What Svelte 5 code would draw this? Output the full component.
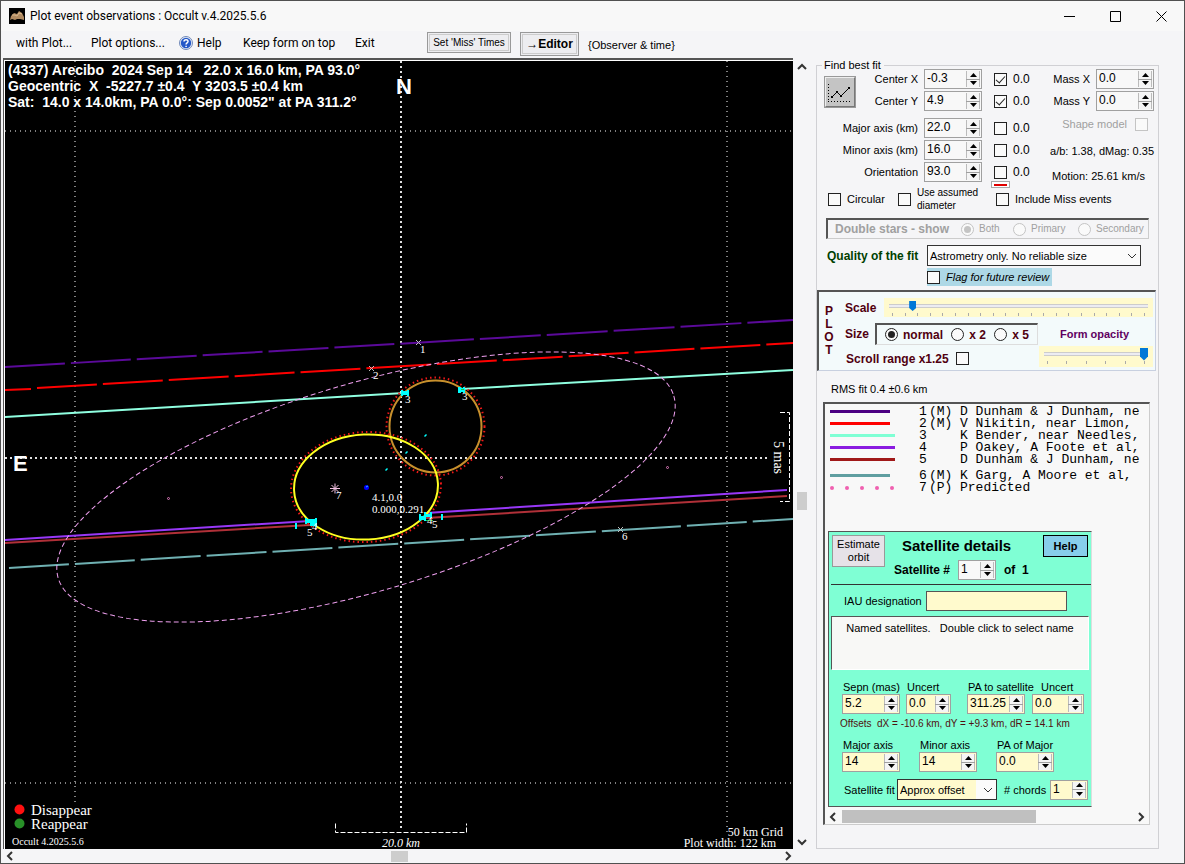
<script>
  const header = [
    "(4337) Arecibo  2024 Sep 14   22.0 x 16.0 km, PA 93.0°",
    "Geocentric  X  -5227.7 ±0.4  Y 3203.5 ±0.4 km",
    "Sat:  14.0 x 14.0km, PA 0.0°: Sep 0.0052\" at PA 311.2°",
  ];

  const fitRows = [
    { id: "cx", label: "Center X", value: "-0.3", checked: true },
    { id: "cy", label: "Center Y", value: "4.9", checked: true },
    { id: "major", label: "Major axis (km)", value: "22.0", checked: false, spaced: true },
    { id: "minor", label: "Minor axis (km)", value: "16.0", checked: false },
    { id: "orient", label: "Orientation", value: "93.0", checked: false },
  ];

  const observers = [
    { n: 1, tag: "(M)", name: "D Dunham & J Dunham, ne", color: "#4b0082", len: 60 },
    { n: 2, tag: "(M)", name: "V Nikitin, near Limon,", color: "#ff0000", len: 60 },
    { n: 3, tag: "", name: "K Bender, near Needles,", color: "#7fffd4", len: 65 },
    { n: 4, tag: "", name: "P Oakey, A Foote et al,", color: "#8a1be0", len: 65 },
    { n: 5, tag: "", name: "D Dunham & J Dunham, ne", color: "#a01818", len: 65 },
    { n: 6, tag: "(M)", name: "K Garg, A Moore et al,", color: "#5f9ea0", len: 60, spaced: true },
    { n: 7, tag: "(P)", name: "Predicted", color: "#f060b0", dots: true },
  ];

  const chords = [
    { x1: 5, y1: 367, x2: 413, y2: 343, color: "#5b0a9a", dash: "60 6" },
    { x1: 413, y1: 343, x2: 793, y2: 320, color: "#5b0a9a", dash: "61 6" },
    { x1: 5, y1: 390, x2: 31, y2: 389, color: "#ff0000" },
    { x1: 37, y1: 388, x2: 371, y2: 368, color: "#ff0000", dash: "60 6" },
    { x1: 371, y1: 368, x2: 793, y2: 343, color: "#ff0000", dash: "60 6" },
    { x1: 5, y1: 417, x2: 404, y2: 393, color: "#8fffe0" },
    { x1: 462, y1: 389, x2: 793, y2: 370, color: "#8fffe0" },
    { x1: 5, y1: 540, x2: 310, y2: 521, color: "#9838f8" },
    { x1: 426, y1: 513, x2: 787, y2: 490, color: "#9838f8" },
    { x1: 5, y1: 543, x2: 310, y2: 525, color: "#b03038" },
    { x1: 426, y1: 518, x2: 787, y2: 496, color: "#b03038" },
    { x1: 9, y1: 568, x2: 621, y2: 530, color: "#6fb0b2", dash: "60 6" },
    { x1: 621, y1: 530, x2: 793, y2: 519, color: "#6fb0b2", dash: "60 6" },
  ];

  const pointLabels = [
    [420, 353, "1"],
    [373, 379, "2"],
    [405, 403, "3"],
    [462, 400, "3"],
    [307, 536, "5"],
    [312, 530, "4"],
    [427, 524, "4"],
    [432, 528, "5"],
    [336, 499, "7"],
    [622, 540, "6"],
  ];

  const separation = [
    { id: "sepn", label: "Sepn (mas)", value: "5.2", width: 58 },
    { id: "sepu", label: "Uncert", value: "0.0", width: 45 },
    { id: "pa", label: "PA to satellite", value: "311.25", width: 58 },
    { id: "pau", label: "Uncert", value: "0.0", width: 52, inset: true },
  ];

  const axes = [
    { id: "smaj", label: "Major axis", value: "14", width: 58 },
    { id: "smin", label: "Minor axis", value: "14", width: 58 },
    { id: "spa", label: "PA of Major", value: "0.0", width: 58 },
  ];
</script>

<svelte:head>
  <title>Plot event observations</title>
</svelte:head>

{#snippet spin(id, value, width, name)}
  <span class="spin" style={`width: ${width}px`}>
    <input {id} type="text" {value} aria-label={name} />
    <span class="arrows">
      <button aria-label="Increase"><svg viewBox="0 0 7 4"><path d="M0 4h7L3.5 0z" /></svg></button>
      <button aria-label="Decrease"><svg viewBox="0 0 7 4"><path d="M0 0h7L3.5 4z" /></svg></button>
    </span>
  </span>
{/snippet}

{#snippet chevron(d)}
  <svg class="chev" viewBox="0 0 10 10" aria-hidden="true"><path {d} /></svg>
{/snippet}

<div class="window">
  <header class="title">
    <svg class="app-icon" viewBox="0 0 16 16" aria-hidden="true">
      <rect width="16" height="16" fill="#000" />
      <path d="M1 12L2 8l3-3 3 1 2-3 3 2 2 4v3l-4-1-3 0-2 1-3-1z" fill="#b08a60" />
      <path d="M3 7l3 0 2 1 2-3 3 1" stroke="#d9b88c" fill="none" />
    </svg>
    <h1>Plot event observations : Occult v.4.2025.5.6</h1>
    <div class="caption">
      <button aria-label="Minimize"><svg viewBox="0 0 11 11"><path d="M0 5.5h11" /></svg></button>
      <button aria-label="Maximize"><svg viewBox="0 0 11 11"><path d="M.5.5h10v10H.5z" /></svg></button>
      <button aria-label="Close"><svg viewBox="0 0 11 11"><path d="M.5.5l10 10M10.5.5l-10 10" /></svg></button>
    </div>
  </header>

  <nav class="menu">
    <button class="item first">with Plot...</button>
    <button class="item second">Plot options...</button>
    <button class="item help">
      <svg viewBox="0 0 14 14" aria-hidden="true">
        <circle cx="7" cy="7" r="6.5" fill="#e8eef8" stroke="#7088b8" />
        <circle cx="7" cy="7" r="5.2" fill="#2458c8" />
        <path d="M5 5.6C5 3 9.2 3 9 5.5 8.9 7 7.1 6.8 7.1 8.5M7.1 9.7v1.3" stroke="#fff" stroke-width="1.5" fill="none" />
      </svg>
      Help
    </button>
    <button class="item keep">Keep form on top</button>
    <button class="item exit">Exit</button>
    <button class="tool">Set 'Miss' Times</button>
    <button class="tool editor">→Editor</button>
    <span class="hint">&#123;Observer &amp; time&#125;</span>
  </nav>

  <main>
    <section class="viewer" aria-label="Plot">
      <div class="canvas">
        <svg viewBox="5 61 788 788" preserveAspectRatio="xMidYMid slice">
          <rect x="5" y="61" width="788" height="788" fill="#000" />

          <g class="grid">
            <path d="M75 61V802M727 61V836M5 131H793M5 783H793" />
            <path class="axis" d="M401 61V830M5 457.5H767" />
          </g>

          <g class="heading">
            {#each header as line, i}
              <text x="8" y={75 + i * 16}>{line}</text>
            {/each}
          </g>
          <text class="compass" x="396" y="94">N</text>
          <text class="compass" x="13" y="471">E</text>

          {#each chords as c}
            <line x1={c.x1} y1={c.y1} x2={c.x2} y2={c.y2} stroke={c.color} stroke-width="2" stroke-dasharray={c.dash} />
          {/each}

          <g fill="none">
            <ellipse cx="366" cy="487" rx="321" ry="104" transform="rotate(-16.5 366 487)" stroke="#f0a0f0" stroke-dasharray="5 3" />
            <circle cx="435.5" cy="426.5" r="49" stroke="#f01818" stroke-width="2" stroke-dasharray="1.5 3" />
            <circle cx="435.5" cy="426.5" r="46" stroke="#c8902c" stroke-width="2" />
            <ellipse cx="366" cy="487" rx="75" ry="55" transform="rotate(-3 366 487)" stroke="#f01818" stroke-width="2" stroke-dasharray="1.5 3" />
            <ellipse cx="366" cy="487" rx="72" ry="52.5" transform="rotate(-3 366 487)" stroke="#ffff20" stroke-width="2" />
          </g>

          <!-- chord ends -->
          <g fill="#00ffff">
            <path d="M401 390h2v1h4v-1h2v6h-2v-1h-4v1h-2z" />
            <path d="M458 387h3v1h2v-1h2v6h-2v-1h-2v1h-3z" />
            <path d="M305 518h2v1h8v-1h2v9h-2v-1h-5v-3h-3v1h-2z" />
            <path d="M419 514h2v2h3v-4h2v2h4v-2h2v7h-2v-2h-4v4h-2v-1h-3v1h-2z" />
            <path d="M295 523h2v6h-2zM441 514h2v6h-2z" />
            <path d="M424 436l2-2 1 1-2 2zM405 453l2-2 1 1-2 2zM385 470l2-2 1 1-2 2z" />
          </g>
          <path d="M304 525.5h6M430 518.5h3" stroke="#c04040" />
          <path d="M426 520.5h7M461 389.5h3" stroke="#20c040" />

          <circle cx="366.5" cy="487.5" r="2.5" fill="#0000ff" />
          <path d="M366 487l2-1" stroke="#20c8ff" />
          <path d="M335 483.5v10M330 488.5h10M331.5 485l7 7M338.5 485l-7 7" stroke="#f0c0e0" />
          <g fill="none" stroke="#d878b8">
            <circle cx="168.5" cy="498.5" r="1" />
            <circle cx="501.5" cy="477.5" r="1" />
            <circle cx="667.5" cy="467.5" r="1" />
          </g>
          <path d="M416 340l5 5m0-5l-5 5M369 366l5 5m0-5l-5 5M618 527l5 5m0-5l-5 5" stroke="#c0c0c0" />

          <g class="small">
            {#each pointLabels as [x, y, label]}
              <text {x} {y}>{label}</text>
            {/each}
            <text x="372" y="501">4.1,0.0</text>
            <text x="372" y="513">0.000,0.291</text>
          </g>

          <g fill="none" stroke="#fff" stroke-dasharray="5 2">
            <path d="M335.5 823.5v9H466.5v-9" />
            <path d="M780 412.5h9.5V501.5h-9.5" />
          </g>
          <text class="scale-label" x="382" y="847">20.0 km</text>
          <text class="mas" transform="translate(774 441) rotate(90)">5 mas</text>
          <text class="note" x="783" y="836" text-anchor="end">50 km Grid</text>
          <text class="note" x="776" y="847" text-anchor="end">Plot width: 122 km</text>

          <circle cx="19.5" cy="809.5" r="5" fill="#ff1010" />
          <circle cx="19.5" cy="823.5" r="5" fill="#289028" />
          <text class="key" x="31" y="815">Disappear</text>
          <text class="key" x="31" y="829">Reappear</text>
          <text class="version" x="12" y="845">Occult 4.2025.5.6</text>
        </svg>
      </div>
      <div class="vscroll">
        {@render chevron("M1 7l4-4 4 4")}
        <i></i>
        {@render chevron("M1 3l4 4 4-4")}
      </div>
      <div class="hscroll">
        {@render chevron("M7 1L3 5l4 4")}
        <i></i>
        {@render chevron("M3 1l4 4-4 4")}
      </div>
    </section>

    <aside>
      <fieldset class="best">
        <legend>Find best fit</legend>

        <div class="fit">
          <button class="fit-icon" aria-label="Fit">
            <svg viewBox="0 0 26 26" aria-hidden="true">
              <path d="M2.5 5v17M2 22.5h22" stroke="#000" stroke-dasharray="1 2" />
              <path d="M6 18l5-5 4 4 8-8" stroke="#000" fill="none" />
              <path d="M5 17h2v2H5zM10 12h2v2h-2zM14 16h2v2h-2zM22 8h2v2h-2z" />
            </svg>
          </button>

          <div class="params">
            {#each fitRows as row}
              <div class="param" class:spaced={row.spaced}>
                <label class="name" for={row.id}>{row.label}</label>
                {@render spin(row.id, row.value, 58, row.label)}
                <label class="sigma"><input type="checkbox" checked={row.checked} />0.0</label>
              </div>
            {/each}
            <button class="swatch" aria-label="Line colour"></button>
          </div>

          <div class="mass">
            <div class="mass-row"><label for="mx">Mass X</label>{@render spin("mx", "0.0", 58, "Mass X")}</div>
            <div class="mass-row"><label for="my">Mass Y</label>{@render spin("my", "0.0", 58, "Mass Y")}</div>
            <label class="shape">Shape model <input type="checkbox" disabled /></label>
            <p>a/b: 1.38, dMag: 0.35</p>
            <p class="motion">Motion: 25.61 km/s</p>
          </div>
        </div>

        <div class="checks">
          <label><input type="checkbox" />Circular</label>
          <label class="assumed"><input type="checkbox" /><span>Use assumed diameter</span></label>
          <label><input type="checkbox" />Include Miss events</label>
        </div>

        <div class="double">
          <b>Double stars - show</b>
          <label><input type="radio" name="star" checked disabled />Both</label>
          <label><input type="radio" name="star" disabled />Primary</label>
          <label><input type="radio" name="star" disabled />Secondary</label>
        </div>

        <div class="quality">
          <label for="quality">Quality of the fit</label>
          <span class="select">
            <select id="quality"><option>Astrometry only. No reliable size</option></select>
            {@render chevron("M1 3l4 4 4-4")}
          </span>
        </div>
        <label class="flag"><input type="checkbox" />Flag for future review</label>

        <section class="plot-box">
          <div class="vertical"><span>P</span><span>L</span><span>O</span><span>T</span></div>
          <div class="plot-rows">
            <div class="scale-row">
              <label for="scale">Scale</label>
              <div class="slider">
                <input id="scale" type="range" min="0" max="20" step="0.1" value="1.6" />
                <div class="ticks">{#each Array(21) as _}<i></i>{/each}</div>
              </div>
            </div>
            <div class="size-row">
              <span>Size</span>
              <div class="sizes">
                <label><input type="radio" name="size" checked />normal</label>
                <label><input type="radio" name="size" />x 2</label>
                <label><input type="radio" name="size" />x 5</label>
              </div>
              <label class="opacity-label" for="opacity">Form opacity</label>
            </div>
            <div class="range-row">
              <label>Scroll range x1.25 <input type="checkbox" /></label>
              <div class="slider opacity">
                <input id="opacity" type="range" value="100" />
                <div class="ticks">{#each Array(6) as _}<i></i>{/each}</div>
              </div>
            </div>
          </div>
        </section>

        <p class="rms">RMS fit 0.4 ±0.6 km</p>

        <section class="list">
          <ul>
            {#each observers as o}
              <li class:spaced={o.spaced}>
                <svg viewBox="0 0 66 12" aria-hidden="true">
                  {#if o.dots}
                    {#each [2, 17, 32, 47, 62] as x}<circle cx={x} cy="6" r="2" fill={o.color} />{/each}
                  {:else}
                    <path d={`M0 5.5H${o.len}`} stroke={o.color} stroke-width="3" />
                  {/if}
                </svg>
                <span>{o.n}</span>
                <span>{o.tag}</span>
                <span>{o.name}</span>
              </li>
            {/each}
          </ul>

          <section class="satellite">
            <div class="sat-head">
              <button class="estimate">Estimate orbit</button>
              <div class="sat-title">
                <h2>Satellite details</h2>
                <div class="sat-number">
                  <label for="satno">Satellite #</label>
                  <span class="plain">{@render spin("satno", "1", 38, "Satellite number")}</span>
                  <span>of&nbsp; 1</span>
                </div>
              </div>
              <button class="sat-help">Help</button>
            </div>

            <div class="iau">
              <label for="iau">IAU designation</label>
              <input id="iau" type="text" />
            </div>

            <div class="named">Named satellites. &nbsp; Double click to select name</div>

            <div class="fields four">
              {#each separation as f}
                <div>
                  <label for={f.id} class:inset={f.inset}>{f.label}</label>
                  {@render spin(f.id, f.value, f.width, f.label)}
                </div>
              {/each}
            </div>
            <p class="offsets">Offsets&nbsp; dX = -10.6 km, dY = +9.3 km, dR = 14.1 km</p>
            <div class="fields three">
              {#each axes as f}
                <div><label for={f.id}>{f.label}</label>{@render spin(f.id, f.value, f.width, f.label)}</div>
              {/each}
            </div>

            <div class="sat-fit">
              <label for="satfit">Satellite fit</label>
              <span class="select">
                <select id="satfit"><option>Approx offset</option></select>
                {@render chevron("M1 3l4 4 4-4")}
              </span>
              <label class="chords" for="chords"># chords</label>
              {@render spin("chords", "1", 38, "Chords")}
            </div>
          </section>

          <div class="hscroll inner">
            {@render chevron("M7 1L3 5l4 4")}
            <i></i>
            {@render chevron("M3 1l4 4-4 4")}
          </div>
        </section>
      </fieldset>
    </aside>
  </main>
</div>

<style>
  :global(body) {
    background: #f5f5f7;
  }

  * {
    box-sizing: border-box;
  }

  h1, h2, p, ul {
    margin: 0;
    padding: 0;
    font-weight: normal;
  }

  button, input, select {
    font: inherit;
    color: inherit;
    margin: 0;
    padding: 0;
    border: 0;
    background: none;
    border-radius: 0;
  }

  label, p, button {
    white-space: nowrap;
  }

  .window {
    display: flex;
    flex-direction: column;
    min-height: 100vh;
    border: 1px solid #505050;
    background: #f5f5f7;
    color: #000;
    font: 11px/14px "Liberation Sans", Arial, sans-serif;
  }

  /* title bar and menu */
  .title {
    display: flex;
    align-items: center;
    height: 30px;
    padding-left: 8px;
    background: #f8f8f8;
  }

  .app-icon {
    width: 16px;
    height: 16px;
    margin-right: 5px;
  }

  h1 {
    flex: 1;
    font: 12px/16px Roboto, sans-serif;
  }

  .caption {
    display: flex;
  }

  .caption button {
    width: 46px;
    height: 28px;
    display: grid;
    place-items: center;
  }

  .caption svg {
    width: 11px;
    height: 11px;
    fill: none;
    stroke: #000;
  }

  .menu {
    display: flex;
    align-items: flex-start;
    height: 27px;
    padding: 1px 0 0 15px;
  }

  .item {
    display: flex;
    align-items: center;
    gap: 4px;
    height: 22px;
    font: 12px/22px Roboto, sans-serif;
  }

  .first { width: 75px; }
  .second { width: 88px; }
  .help { width: 64px; }
  .keep { width: 112px; }
  .exit { width: 72px; }

  .item svg {
    width: 14px;
    height: 14px;
  }

  .tool {
    width: 84px;
    height: 21px;
    margin-right: 9px;
    border: 1px solid #999;
    outline: 1px solid #ccc;
    outline-offset: -3px;
    background: #ededf0;
    font-size: 10px;
  }

  .editor {
    width: 59px;
    height: 24px;
    font-size: 12px;
    font-weight: bold;
  }

  .hint {
    line-height: 26px;
  }

  /* plot */
  main {
    flex: 1;
    display: grid;
    grid-template-columns: minmax(0, 1fr) 374px;
  }

  .viewer {
    display: grid;
    grid-template-columns: minmax(0, 1fr) 17px;
    grid-template-rows: minmax(0, 1fr) 14px;
    padding-left: 2px;
  }

  .canvas {
    position: relative;
    border-top: 2px solid #555;
    border-left: 1px solid #555;
    box-shadow: inset 1px 1px #fff;
    padding: 1px 0 0 1px;
  }

  .canvas > svg {
    display: block;
    width: 100%;
    height: 100%;
  }

  .canvas text {
    fill: #fff;
    font-family: "Liberation Serif", "Times New Roman", serif;
    white-space: pre;
  }

  .canvas .heading text {
    font: bold 14px "Liberation Sans", Arial, sans-serif;
  }

  .canvas .compass {
    font: bold 22px "Liberation Sans", Arial, sans-serif;
  }

  .small text { font-size: 11px; }
  .note { font-size: 12px; }
  .mas { font-size: 14px; }
  .key { font-size: 15px; }
  .version { font-size: 10px; }

  .scale-label {
    font-size: 12px;
    font-style: italic;
  }

  .grid path {
    fill: none;
    stroke: #808080;
    stroke-width: 2;
    stroke-dasharray: 1 4;
    shape-rendering: crispEdges;
  }

  .grid .axis {
    stroke: #e0e0e0;
    stroke-dasharray: 2 3;
  }

  .chev {
    width: 10px;
    height: 10px;
    fill: none;
    stroke: #333;
    stroke-width: 2;
  }

  .vscroll {
    display: flex;
    flex-direction: column;
    align-items: center;
    padding: 4px 0 2px;
  }

  .vscroll i {
    width: 10px;
    height: 18px;
    margin: auto 0;
    position: relative;
    top: 46px;
    background: #cdcdcd;
  }

  .hscroll {
    display: flex;
    align-items: center;
    padding: 0 0 0 2px;
  }

  .hscroll i {
    width: 17px;
    height: 11px;
    margin: 0 auto;
    background: #cdcdcd;
  }

  /* right hand form */
  aside {
    padding: 3px 25px 14px 6px;
  }

  .best {
    min-width: 0;
    height: 100%;
    margin: 0;
    padding: 0;
    border: 1px solid #d0d0d4;
  }

  legend {
    margin-left: 5px;
    padding: 0 3px 0 2px;
    line-height: 8px;
  }

  input[type="checkbox"], input[type="radio"] {
    appearance: none;
    flex: none;
    position: relative;
    width: 13px;
    height: 13px;
    border: 1px solid #222;
    background: #fafafa;
  }

  input[type="radio"] {
    border-radius: 50%;
  }

  input[type="checkbox"]:checked::after {
    content: "";
    position: absolute;
    left: 3px;
    top: 0;
    width: 4px;
    height: 8px;
    border: solid #222;
    border-width: 0 1px 1px 0;
    transform: rotate(42deg);
  }

  input[type="radio"]:checked::after {
    content: "";
    position: absolute;
    inset: 2px;
    border-radius: 50%;
    background: #222;
  }

  input:disabled {
    border-color: #c4c4c4 !important;
  }

  input[type="radio"]:disabled::after {
    background: #c4c4c4 !important;
  }

  .spin {
    display: flex;
    height: 20px;
    padding: 1px;
    border: 1px solid #a0a0a0;
    background: #f8f8f8;
  }

  .spin input {
    flex: 1;
    min-width: 0;
    height: 14px;
    padding-left: 1px;
    font-size: 12px;
    line-height: 14px;
  }

  .arrows {
    display: flex;
    flex-direction: column;
    gap: 1px;
    width: 14px;
    background: #a0a0a0;
  }

  .arrows button {
    flex: 1;
    display: grid;
    place-items: center;
    border: solid #bbb;
    border-width: 0 1px;
    background: #f5f5f5;
  }

  .arrows svg {
    display: block;
    width: 7px;
    height: 4px;
  }

  .fit {
    display: flex;
    height: 112px;
  }

  .fit-icon {
    width: 32px;
    height: 32px;
    margin: 7px 0 0 7px;
    border: 2px solid;
    border-color: #eee #777 #777 #eee;
    outline: 1px solid #999;
    outline-offset: -1px;
    background: #c4c4c4;
  }

  .fit-icon svg {
    display: block;
    width: 26px;
    height: 26px;
  }

  .params {
    position: relative;
  }

  .param {
    display: grid;
    grid-template-columns: 62px 58px 40px;
    column-gap: 6px;
    align-items: center;
    margin-bottom: 2px;
  }

  .param.spaced {
    margin-top: 7px;
  }

  .name {
    justify-self: end;
  }

  .sigma {
    display: flex;
    align-items: center;
    gap: 6px;
    padding-left: 6px;
    font-size: 12px;
  }

  .swatch {
    position: absolute;
    left: 135px;
    top: 112px;
    width: 19px;
    height: 7px;
    border: 1px solid #aaa;
    background: linear-gradient(#e00000, #e00000) center / 13px 2px no-repeat #fff;
  }

  .mass {
    flex: 1;
    display: flex;
    flex-direction: column;
    align-items: flex-end;
    padding-right: 4px;
  }

  .mass-row {
    display: flex;
    align-items: center;
    gap: 6px;
    margin-bottom: 2px;
  }

  .shape {
    display: flex;
    align-items: center;
    gap: 8px;
    margin: 4px 6px 13px 0;
    color: #a0a0a0;
  }

  .motion {
    padding: 11px 9px 0 0;
  }

  .checks {
    display: grid;
    grid-template-columns: 70px 98px 1fr;
    align-items: center;
    height: 26px;
    margin: 5px 0 0 11px;
  }

  .checks label {
    display: flex;
    align-items: center;
    gap: 6px;
  }

  .assumed span {
    width: 66px;
    font-size: 10px;
    line-height: 13px;
    white-space: normal;
  }

  .double {
    display: grid;
    grid-template-columns: 126px 52px 65px 1fr;
    align-items: center;
    height: 21px;
    margin: 6px 9px 0;
    padding-left: 7px;
    border: 1px solid #ccc;
    border-width: 2px 1px 1px 2px;
    border-color: #555 #ccc #ccc #555;
    color: #a0a0a0;
    font-size: 10px;
  }

  .double b {
    font-size: 12px;
  }

  .double label {
    display: flex;
    align-items: center;
    gap: 5px;
  }

  .quality {
    display: grid;
    grid-template-columns: 100px 1fr;
    align-items: center;
    margin: 6px 17px 0 10px;
  }

  .quality label {
    color: #004000;
    font-size: 12px;
    font-weight: bold;
  }

  .select {
    display: block;
    position: relative;
    height: 21px;
  }

  .select select {
    appearance: none;
    width: 100%;
    height: 21px;
    padding-left: 2px;
    border: 1px solid #333;
    background: #fbfbfb;
  }

  .select .chev {
    position: absolute;
    right: 4px;
    top: 6px;
    stroke-width: 1;
    pointer-events: none;
  }

  .flag {
    display: flex;
    align-items: center;
    gap: 6px;
    width: 125px;
    height: 18px;
    margin: 2px 0 0 110px;
    background: #add8e6;
    font-style: italic;
  }

  .plot-box {
    display: flex;
    gap: 6px;
    height: 81px;
    margin: 4px 2px 0 0;
    border: solid;
    border-width: 2px 1px 1px 2px;
    border-color: #555 #c8d0e0 #c8d0e0 #555;
    background: #f3fafb;
    color: #500010;
    font-size: 12px;
    font-weight: bold;
  }

  .vertical {
    display: flex;
    flex-direction: column;
    align-items: center;
    width: 20px;
    padding-top: 13px;
    line-height: 13px;
  }

  .plot-rows {
    flex: 1;
    padding-right: 2px;
  }

  .scale-row, .size-row, .range-row {
    display: flex;
    align-items: center;
  }

  .scale-row {
    margin-top: 6px;
  }

  .scale-row > label {
    width: 39px;
  }

  .slider {
    flex: 1;
    height: 19px;
    padding: 3px 5px 0;
    background: #fffacd;
  }

  .slider.opacity {
    flex: none;
    width: 114px;
    height: 21px;
    margin-left: auto;
  }

  .slider input {
    appearance: none;
    display: block;
    width: 100%;
    height: 10px;
    background: linear-gradient(#ececf2, #ececf2) center / 100% 2px no-repeat, linear-gradient(#ccc, #ccc) center / 100% 4px no-repeat;
  }

  .slider input::-webkit-slider-thumb {
    appearance: none;
    width: 7px;
    height: 10px;
    background: #0078d7;
    clip-path: polygon(0 0, 100% 0, 100% 70%, 50% 100%, 0 70%);
  }

  .slider.opacity input::-webkit-slider-thumb {
    width: 8px;
    height: 13px;
  }

  .ticks {
    display: flex;
    justify-content: space-between;
    padding: 2px 3px 0;
  }

  .ticks i {
    width: 1px;
    height: 3px;
    background: #aaa;
  }

  .size-row {
    height: 22px;
    margin-top: 6px;
  }

  .size-row > span {
    width: 30px;
  }

  .sizes {
    display: flex;
    align-items: center;
    justify-content: space-between;
    width: 163px;
    height: 22px;
    padding: 0 8px 0 8px;
    border: 2px solid;
    border-width: 2px 1px 1px 2px;
    border-color: #555 #ddd #ddd #555;
  }

  .sizes label {
    display: flex;
    align-items: center;
    gap: 5px;
  }

  .opacity-label {
    margin-left: 22px;
    color: #600060;
    font-size: 11px;
  }

  .range-row {
    margin-top: 1px;
  }

  .range-row label {
    display: flex;
    align-items: center;
    gap: 7px;
    padding: 4px 0 0 1px;
  }

  .rms {
    margin: 11px 0 0 14px;
  }

  .list {
    margin: 6px 8px 0 6px;
    border: 1px solid #ccc;
    border-width: 2px 1px 1px 2px;
    border-color: #555 #ccc #ccc #555;
    background: #f8f8f8;
    overflow: hidden;
  }

  .list ul {
    padding-top: 2px;
    margin-bottom: 37px;
    list-style: none;
    font: 13px/12px "Liberation Mono", "Courier New", monospace;
  }

  .list li {
    display: grid;
    grid-template-columns: 89px 10px 31px 1fr;
    height: 12px;
    padding-left: 5px;
    white-space: nowrap;
  }

  .list li.spaced {
    margin-top: 4px;
  }

  .list li svg {
    width: 66px;
    height: 12px;
  }

  .satellite {
    width: 264px;
    margin-left: 3px;
    padding-bottom: 6px;
    border: 1px solid #555;
    border-right-color: #ddd;
    background: #7fffd4;
  }

  .sat-head {
    display: flex;
    height: 53px;
    margin: 0 0 0 2px;
    padding: 3px 3px 0 1px;
    border-bottom: 1px solid #333;
  }

  .estimate {
    width: 53px;
    height: 32px;
    border: 1px solid #999;
    background: #e6e2e8;
    line-height: 13px;
    white-space: normal;
  }

  .sat-title {
    flex: 1;
    padding-left: 9px;
    font-weight: bold;
  }

  h2 {
    margin: 0 0 3px 8px;
    font-size: 15px;
    font-weight: bold;
    line-height: 22px;
  }

  .sat-number {
    display: flex;
    align-items: center;
    gap: 8px;
    font-size: 12px;
    line-height: 20px;
  }

  .sat-number input {
    font-weight: normal;
  }

  .sat-help {
    width: 45px;
    height: 22px;
    border: 1px solid #000;
    background: #87ceeb;
    font-weight: bold;
  }

  .iau {
    display: grid;
    grid-template-columns: 82px 141px;
    align-items: center;
    margin: 6px 0 0 15px;
  }

  .iau input {
    height: 20px;
    border: 1px solid #555;
    background: #fffacd;
  }

  .named {
    height: 54px;
    margin: 5px 2px 0 2px;
    padding-top: 4px;
    border: 1px solid #fff;
    border-color: #555 #fff #fff #555;
    background: #f8f8f6;
    text-align: center;
  }

  .fields {
    display: grid;
    margin: 10px 0 0 13px;
  }

  .four { grid-template-columns: 64px 61px 65px 52px; }

  .three {
    grid-template-columns: 77px 77px 58px;
    margin-top: 7px;
  }

  .fields label {
    display: block;
    padding-left: 1px;
  }

  .fields .inset {
    padding-left: 9px;
  }

  .satellite .spin {
    background: #fffacd;
  }

  .satellite .plain .spin {
    background: #f8f8f8;
  }

  .offsets {
    margin: 3px 0 0 11px;
    color: #501010;
    font-size: 10px;
  }

  .sat-fit {
    display: grid;
    grid-template-columns: 53px 100px 53px 38px;
    align-items: center;
    margin: 7px 0 0 15px;
  }

  .sat-fit select {
    background: linear-gradient(90deg, #fffacd 80%, #fbfbfb 80%);
  }

  .chords {
    padding-left: 7px;
  }

  .hscroll.inner {
    height: 15px;
    margin-top: 2px;
    padding: 0 3px;
  }

  .hscroll.inner i {
    width: 194px;
    height: 13px;
    margin: 0 auto 0 4px;
    background: #c0c0c0;
  }
</style>
